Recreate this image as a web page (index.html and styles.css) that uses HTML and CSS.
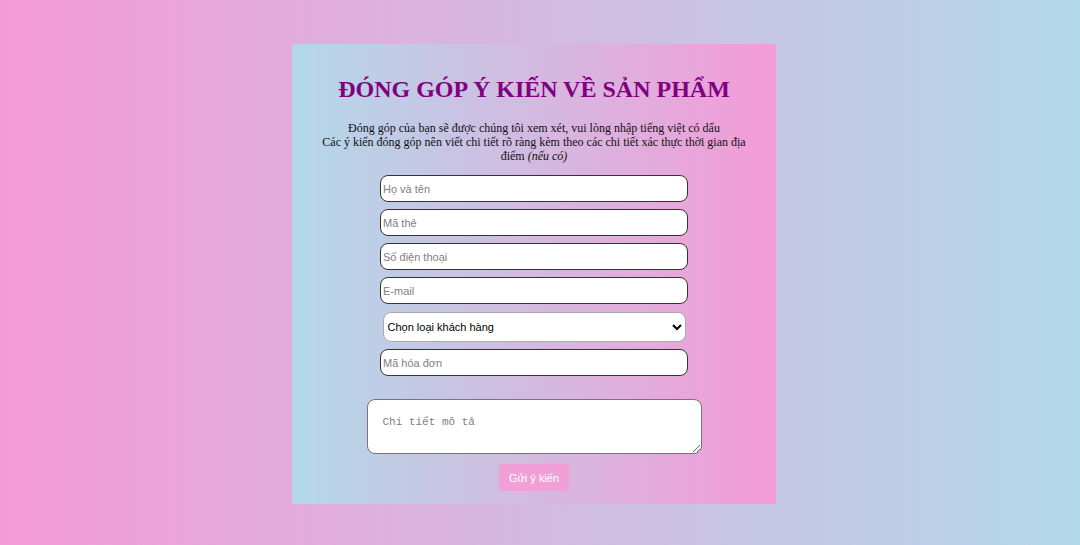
FILE: index.html
```html
<!DOCTYPE html>
<html lang="vi">
<head>
<meta charset="utf-8">
<title>Đóng góp ý kiến</title>
<link rel="stylesheet" href="styles.css">
</head>
<body>
<div class="page">
  <form class="card">
    <h1 class="title">ĐÓNG GÓP Ý KIẾN VỀ SẢN PHẨM</h1>
    <p class="intro">Đóng góp của bạn sẽ được chúng tôi xem xét, vui lòng nhập tiếng việt có dấu<br>Các ý kiến đóng góp nên viết chi tiết rõ ràng kèm theo các chi tiết xác thực thời gian địa điểm <i>(nếu có)</i></p>
    <div class="fields">
      <input class="field" type="text" placeholder="Họ và tên">
      <input class="field" type="text" placeholder="Mã thẻ">
      <input class="field" type="text" placeholder="Số điện thoại">
      <input class="field" type="text" placeholder="E-mail">
      <select class="choice"><option>Chọn loại khách hàng</option></select>
      <input class="field" type="text" placeholder="Mã hóa đơn">
      <textarea class="detail" placeholder="Chi tiết mô tả"></textarea>
      <button class="send" type="button">Gửi ý kiến</button>
    </div>
  </form>
</div>
</body>
</html>
```
FILE: styles.css
```css
html, body {
  margin: 0;
  height: 100%;
}
body {
  background: linear-gradient(to right, #f49bd7, #b3d8ea);
  font-family: "Liberation Serif", serif;
}
.page {
  display: flex;
  justify-content: center;
  padding: 44px 12px 0 0;
}
.card {
  width: 484px;
  height: 460px;
  box-sizing: border-box;
  background: linear-gradient(to right, #b3d8ea, #f49bd7);
  border-radius: 3px;
  padding: 31px 24px 0;
  text-align: center;
}
.title {
  margin: 0;
  font-size: 24px;
  line-height: 28px;
  color: #800080;
  font-weight: bold;
}
.intro {
  margin: 18px 0 0;
  font-size: 12px;
  line-height: 14px;
  color: #111;
}
.intro i { font-style: italic; }
.fields {
  display: flex;
  flex-direction: column;
  align-items: center;
  margin-top: 12px;
}
.field {
  width: 308px;
  height: 27px;
  box-sizing: border-box;
  border: 1px solid #333;
  border-radius: 8px;
  padding: 0 2px;
  font-family: "Liberation Sans", Arial, sans-serif;
  font-size: 11px;
  margin-bottom: 7px;
  background: #fff;
}
.field::placeholder { color: #808080; }
.choice {
  width: 303px;
  height: 30px;
  box-sizing: border-box;
  border: 1px solid #aaa;
  border-radius: 8px;
  padding: 0;
  font-family: "Liberation Sans", Arial, sans-serif;
  font-size: 11px;
  color: #000;
  background: #fff;
  margin: 1px 0 7px;
}
.detail {
  width: 335px;
  height: 55px;
  box-sizing: border-box;
  border: 1px solid #767676;
  border-radius: 8px;
  padding: 16px 15px;
  font-family: "Liberation Mono", "DejaVu Sans Mono", monospace;
  font-size: 11px;
  margin-top: 16px;
  resize: both;
}
.detail::placeholder { color: #808080; }
.send {
  margin-top: 10px;
  width: 70px;
  height: 27px;
  border: none;
  border-radius: 2px;
  background: #f29fd7;
  color: #fff;
  font-family: "Liberation Sans", Arial, sans-serif;
  font-size: 11px;
}
```
